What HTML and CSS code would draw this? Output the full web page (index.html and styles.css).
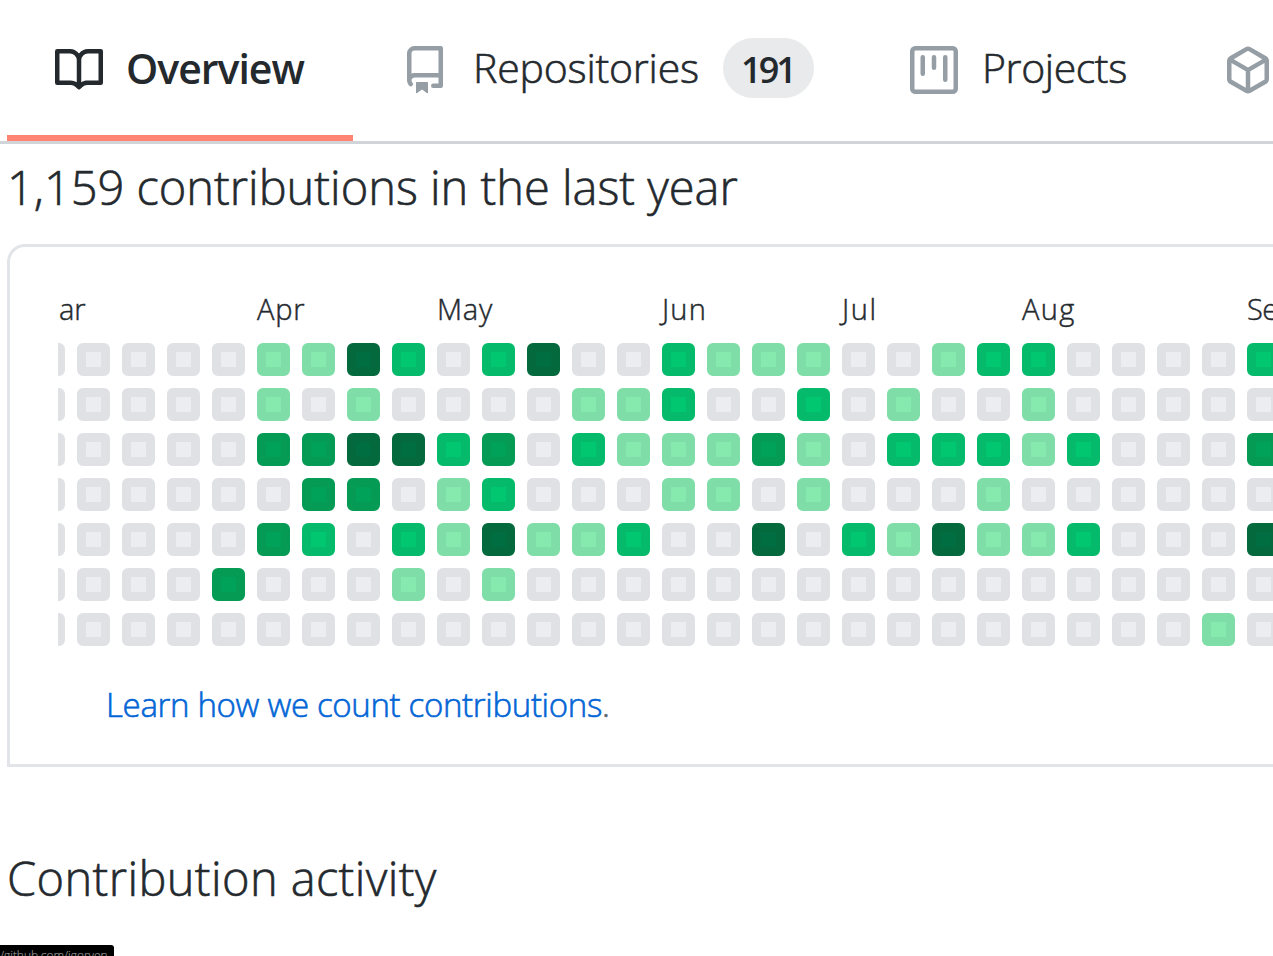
FILE: index.html
```html
<!DOCTYPE html>
<html lang="en">
<head>
<meta charset="utf-8">
<title>Overview</title>
<link rel="stylesheet" href="styles.css">
</head>
<body>
<nav class="tabs">
  <a class="tab selected">
    <svg class="icon" viewBox="0 0 16 16"><path fill-rule="evenodd" d="M0 1.75A.75.75 0 01.75 1h4.253c1.227 0 2.317.59 3 1.501A3.744 3.744 0 0111.006 1h4.245a.75.75 0 01.75.75v10.5a.75.75 0 01-.75.75h-4.507a2.25 2.25 0 00-1.591.659l-.622.621a.75.75 0 01-1.06 0l-.622-.621A2.25 2.25 0 005.258 13H.75a.75.75 0 01-.75-.75V1.75zm8.755 3a2.25 2.25 0 012.25-2.25H14.5v9h-3.757c-.71 0-1.4.201-1.992.572l.004-7.322zm-1.504 7.324l.004-5.073-.002-2.253A2.25 2.25 0 005.003 2.5H1.5v9h3.757a3.75 3.75 0 011.994.574z"/></svg>
    <span class="label overview">Overview</span>
  </a>
  <a class="tab">
    <svg class="icon" viewBox="0 0 16 16"><path fill-rule="evenodd" d="M2 2.5A2.5 2.5 0 014.5 0h8.75a.75.75 0 01.75.75v12.5a.75.75 0 01-.75.75h-2.5a.75.75 0 110-1.5h1.75v-2h-8a1 1 0 00-.714 1.7.75.75 0 01-1.072 1.05A2.495 2.495 0 012 11.5v-9zm10.5-1V9h-8c-.356 0-.694.074-1 .208V2.5a1 1 0 011-1h8zM5 12.25v3.25a.25.25 0 00.4.2l1.45-1.087a.25.25 0 01.3 0L8.6 15.7a.25.25 0 00.4-.2v-3.25a.25.25 0 00-.25-.25h-3.5a.25.25 0 00-.25.25z"/></svg>
    <span class="label repositories">Repositories</span>
    <span class="counter">191</span>
  </a>
  <a class="tab">
    <svg class="icon" viewBox="0 0 16 16"><path fill-rule="evenodd" d="M1.75 0A1.75 1.75 0 000 1.75v12.5C0 15.216.784 16 1.75 16h12.5A1.75 1.75 0 0016 14.25V1.75A1.75 1.75 0 0014.25 0H1.75zM1.5 1.75a.25.25 0 01.25-.25h12.5a.25.25 0 01.25.25v12.5a.25.25 0 01-.25.25H1.75a.25.25 0 01-.25-.25V1.75zM11.75 3a.75.75 0 00-.75.75v7.5a.75.75 0 001.5 0v-7.5a.75.75 0 00-.75-.75zm-8.25.75a.75.75 0 011.5 0v5.5a.75.75 0 01-1.5 0v-5.5zM8 3a.75.75 0 00-.75.75v3.5a.75.75 0 001.5 0v-3.5A.75.75 0 008 3z"/></svg>
    <span class="label projects">Projects</span>
  </a>
  <a class="tab last">
    <svg class="icon" viewBox="0 0 16 16"><path fill-rule="evenodd" d="M8.878.392a1.75 1.75 0 00-1.756 0l-5.25 3.045A1.75 1.75 0 001 4.951v6.098c0 .624.332 1.2.872 1.514l5.25 3.045a1.75 1.75 0 001.756 0l5.25-3.045c.54-.313.872-.89.872-1.514V4.951c0-.624-.332-1.2-.872-1.514L8.878.392zM7.875 1.69a.25.25 0 01.25 0l4.63 2.685L8 7.133 3.245 4.375l4.63-2.685zM2.5 5.677v5.372c0 .09.047.171.125.216l4.625 2.683V8.432L2.5 5.677zm6.25 8.271l4.625-2.683a.25.25 0 00.125-.216V5.677L8.75 8.432v5.516z"/></svg>
  </a>
</nav>
<main>
  <h2 class="heading contributions">1,159 contributions in the last year</h2>
  <section class="panel">
    <div class="calendar">
      <div class="months">
        <span class="month march">ar</span>
        <span class="month apr">Apr</span>
        <span class="month may">May</span>
        <span class="month jun">Jun</span>
        <span class="month jul">Jul</span>
        <span class="month aug">Aug</span>
        <span class="month sep">Se</span>
      </div>
      <div class="clip"><div class="days" id="days"></div></div>
    </div>
    <p class="learn"><a>Learn how we count contributions</a>.</p>
  </section>
  <h2 class="heading activity">Contribution activity</h2>
</main>
<div class="status">/github.com/igorven</div>
<script src="calendar.js"></script>
</body>
</html>
```

FILE: styles.css
```css
* { box-sizing: border-box; }
html, body { height: 100%; }
body {
  margin: 0;
  overflow: hidden;
  background: #fff;
  color: #24292e;
  font-family: "Open Sans", "Noto Sans", sans-serif;
  font-weight: 300;
  -webkit-text-stroke: 0.6px currentColor;
}
.tabs {
  display: flex;
  height: 144px;
  padding-left: 7px;
  border-bottom: 3px solid #d1d5da;
}
.tab {
  display: flex;
  flex: none;
  align-items: center;
  gap: 24px;
  height: 141px;
  padding: 0 48px 5px;
}
.tab.last { padding-right: 0; }
.tab.selected { border-bottom: 6px solid #ff8572; padding-bottom: 0; }
.icon {
  flex: none;
  width: 48px;
  height: 48px;
  margin-top: 4px;
  fill: #959da5;
}
.selected .icon { fill: #24292e; }
.label { font-size: 41px; line-height: 60px; white-space: nowrap; }
.tab:not(.selected) .label { margin-top: -2px; }
.overview {
  width: 178px;
  margin: 0 1px 0 -1px;
  font-weight: 600;
  letter-spacing: -1px;
  -webkit-text-stroke: 0;
}
.repositories { width: 226px; letter-spacing: -0.2px; }
.projects { width: 146px; letter-spacing: -0.4px; }
.counter {
  width: 91px;
  height: 60px;
  border-radius: 30px;
  background: #e8eaec;
  font-size: 36px;
  font-weight: 600;
  line-height: 63px;
  letter-spacing: -3px;
  text-indent: -2px;
  text-align: center;
  -webkit-text-stroke: 0;
}
.heading {
  margin: 0 0 0 7px;
  font-size: 47px;
  font-weight: 300;
  line-height: 72px;
  white-space: nowrap;
}
.contributions { margin-top: 7px; letter-spacing: -0.02px; }
.panel {
  height: 523px;
  margin: 21px 0 0 7px;
  padding: 45px 0 0 48px;
  border: 3px solid #e1e4e8;
  border-right: 0;
  border-radius: 18px 0 0 0;
}
.calendar { height: 356px; }
.months, .days {
  display: grid;
  grid-template-columns: repeat(28, 33px);
  column-gap: 12px;
  margin-left: -26px;
}
.months { height: 51px; }
.month {
  grid-row: 1;
  font-size: 29px;
  line-height: 33px;
  letter-spacing: 0.8px;
  white-space: nowrap;
  -webkit-text-stroke-width: 0.45px;
}
.march { grid-column: 1; margin-left: 27px; letter-spacing: 0; }
.apr { grid-column: 6; }
.may { grid-column: 10; }
.jun { grid-column: 15; letter-spacing: 1.2px; }
.jul { grid-column: 19; letter-spacing: 1.6px; }
.aug { grid-column: 23; letter-spacing: 1.4px; }
.sep { grid-column: 28; width: 26px; letter-spacing: -0.5px; }
.clip { overflow: hidden; }
.days { row-gap: 12px; }
.day {
  height: 33px;
  border: 9px solid #dfe1e5;
  border-radius: 6px;
  background: #ebedf0;
}
.level-1 { border-color: #7fdda7; background: #86eaaf; }
.level-2 { border-color: #05bb6b; background: #00c770; }
.level-3 { border-color: #059b55; background: #00a259; }
.level-4 { border-color: #04693d; background: #006e40; }
.learn {
  margin: 32px 0 0 48px;
  color: #586069;
  font-size: 33px;
  line-height: 50px;
  letter-spacing: -0.33px;
  white-space: nowrap;
}
.learn a { color: #0366d6; }
.activity { margin-top: 75px; letter-spacing: 0.38px; }
.status {
  position: fixed;
  left: 0;
  top: 945px;
  width: 114px;
  height: 11px;
  overflow: hidden;
  border-radius: 0 3px 0 0;
  background: #000;
  color: #909090;
  font-size: 12px;
  line-height: 22px;
  letter-spacing: -0.05px;
  white-space: nowrap;
  -webkit-text-stroke-width: 0.2px;
}
```

FILE: calendar.js
```js
// One row per weekday, one digit (activity level 0-4) per week.
const levels = [
  "0000011420240021110012200002",
  "0000010100001120020100100000",
  "0000033442302111310222120003",
  "0000003301200011010001000000",
  "0000032021411200402141120004",
  "0000300010100000000000000000",
  "0000000000000000000000000010"
];
const days = document.getElementById("days");
for (const row of levels) {
  for (const level of row) {
    const day = document.createElement("span");
    day.className = "day level-" + level;
    days.appendChild(day);
  }
}
```
